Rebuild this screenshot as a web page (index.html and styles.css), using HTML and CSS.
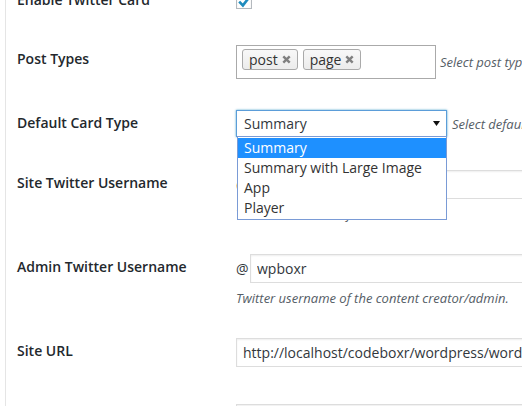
FILE: index.html
```html
<!DOCTYPE html>
<html>
<head>
<meta charset="utf-8">
<link rel="stylesheet" href="styles.css">
</head>
<body>
<div class="form">
  <div class="label l-check">Enable Twitter Card</div>
  <div class="field f-check">
    <span class="checkbox"><svg width="16" height="16" viewBox="0 0 16 16"><path d="M3.2 8.6 L6.9 12.4 L13.6 3.8" fill="none" stroke="#1e8cbe" stroke-width="2.6" stroke-linecap="butt" stroke-linejoin="miter"/></svg></span>
  </div>

  <div class="label l-tags">Post Types</div>
  <div class="field inline">
    <div class="tagbox">
      <span class="tag">post<svg class="x" width="9" height="9" viewBox="0 0 9 9"><path d="M1.3 1.3 L7.7 7.7 M7.7 1.3 L1.3 7.7" stroke="#808080" stroke-width="2.4"/></svg></span>
      <span class="tag">page<svg class="x" width="9" height="9" viewBox="0 0 9 9"><path d="M1.3 1.3 L7.7 7.7 M7.7 1.3 L1.3 7.7" stroke="#808080" stroke-width="2.4"/></svg></span>
    </div>
    <span class="help help-tags">Select post types</span>
  </div>

  <div class="label">Default Card Type</div>
  <div class="field inline">
    <div class="select">
      <span class="select-value">Summary</span>
      <svg class="arrow" width="7" height="5" viewBox="0 0 7 5"><path d="M0 0 H7 L3.5 5 Z" fill="#111"/></svg>
      <ul class="options">
        <li class="opt active">Summary</li>
        <li class="opt">Summary with Large Image</li>
        <li class="opt">App</li>
        <li class="opt">Player</li>
      </ul>
    </div>
    <span class="help help-select">Select default card type</span>
  </div>

  <div class="label">Site Twitter Username</div>
  <div class="field">
    <div class="at-row"><span class="at">@</span><input class="text at-input" type="text" value="codeboxr"></div>
    <p class="help block">Twitter username of the website.</p>
  </div>

  <div class="label">Admin Twitter Username</div>
  <div class="field">
    <div class="at-row"><span class="at">@</span><input class="text at-input" type="text" value="wpboxr"></div>
    <p class="help block">Twitter username of the content creator/admin.</p>
  </div>

  <div class="label">Site URL</div>
  <div class="field">
    <input class="text wide" type="text" value="http://localhost/codeboxr/wordpress/wordpress">
  </div>

  <div class="label"></div>
  <div class="field">
    <input class="text wide" type="text" value="">
  </div>
</div>
</body>
</html>
```
FILE: styles.css
```css
html, body {
  margin: 0;
  padding: 0;
  background: #fff;
  overflow: hidden;
}
body {
  font-family: "Open Sans", "Noto Sans", sans-serif;
  font-size: 14px;
  color: #32373c;
}
.form {
  display: grid;
  grid-template-columns: 219px minmax(0, 1fr);
  grid-template-rows: 54px 65px 60px 84px 84px 66px 60px;
  margin: -9px 0 0 5px;
  border-left: 1px solid #e5e5e5;
  padding-left: 11px;
}
.label {
  font-weight: 600;
  color: #23282d;
  line-height: 18px;
  padding-top: 4px;
  white-space: nowrap;
}
.l-check { padding-top: 0; }
.l-tags { padding-top: 5px; }
.field {
  min-width: 0;
  position: relative;
}
.f-check { padding-top: 2px; }
.inline {
  display: flex;
  align-items: center;
  align-self: start;
  white-space: nowrap;
}
.checkbox {
  display: block;
  width: 14px;
  height: 14px;
  border: 1px solid #b4b9be;
  background: #fff;
  box-shadow: inset 0 1px 2px rgba(0,0,0,.1);
  position: relative;
}
.checkbox svg {
  position: absolute;
  left: -1px;
  top: -1px;
}
.tagbox {
  box-sizing: border-box;
  flex: 0 0 200px;
  width: 200px;
  height: 34px;
  border: 1px solid #aaa;
  background: #fff;
  padding: 3px 5px;
  display: flex;
  gap: 5px;
  align-items: flex-start;
}
.tag {
  box-sizing: border-box;
  height: 21px;
  display: inline-flex;
  align-items: center;
  gap: 4px;
  padding: 0 6px 0 6px;
  border: 1px solid #aaa;
  border-radius: 3px;
  background: linear-gradient(#f8f8f8, #ececec);
  color: #333;
  line-height: 19px;
}
.x { display: block; }
.help {
  font-style: italic;
  font-size: 13px;
  color: #555d66;
  line-height: 18px;
}
.help-tags { margin-left: 4px; }
.help-select { margin-left: 5px; }
.select {
  box-sizing: border-box;
  flex: 0 0 211px;
  position: relative;
  width: 211px;
  height: 27px;
  border: 1px solid #5b9dd9;
  box-shadow: 0 0 2px rgba(30,140,190,.8);
  background: #fff;
  display: flex;
  align-items: center;
  padding: 0 6px 0 7px;
  color: #32373c;
}
.select-value { flex: 1; line-height: 18px; }
.arrow { display: block; margin-right: 0; }
.options {
  position: absolute;
  top: 100%;
  left: 0;
  width: 210px;
  box-sizing: border-box;
  margin: 0;
  padding: 1px 0;
  list-style: none;
  background: #fff;
  border: 1px solid #7a9bd6;
  z-index: 5;
}
.opt {
  height: 20px;
  line-height: 20px;
  padding-left: 6px;
  color: #333;
  white-space: nowrap;
}
.opt.active {
  background: #1e90ff;
  color: #fff;
}
.at-row {
  display: flex;
  align-items: center;
}
.at {
  flex: 0 0 14px;
  width: 14px;
  font-size: 14px;
  color: #32373c;
}
.text {
  box-sizing: border-box;
  height: 29px;
  border: 1px solid #ddd;
  box-shadow: inset 0 1px 2px rgba(0,0,0,.07);
  background: #fff;
  font: inherit;
  font-size: 14px;
  color: #32373c;
  padding: 0 6px;
  margin: 0;
  outline: none;
}
.at-input { width: 400px; flex: 0 0 400px; }
.wide { width: 420px; display: block; }
.block {
  margin: 6px 0 0;
  white-space: nowrap;
}
```
